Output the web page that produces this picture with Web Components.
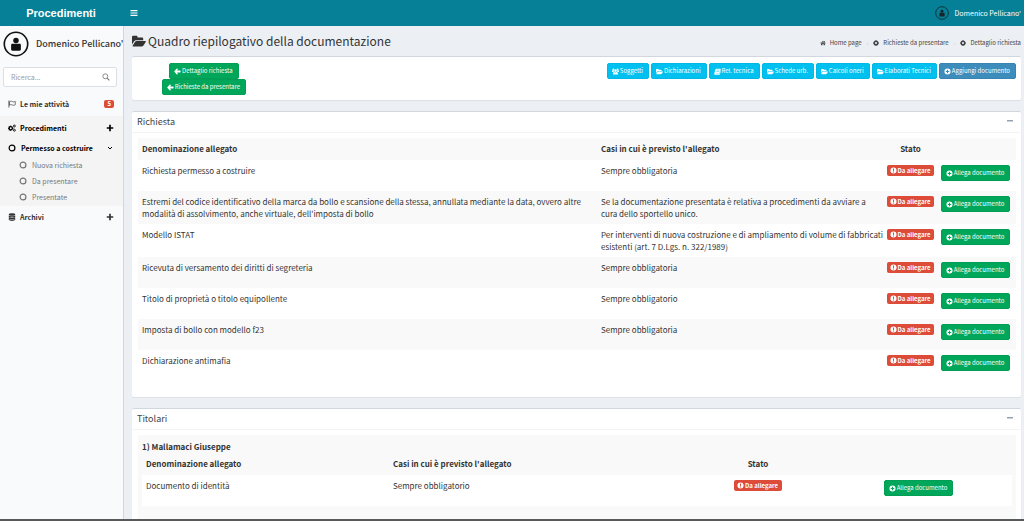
<!DOCTYPE html>
<html lang="it">
<head>
<meta charset="utf-8">
<title>Procedimenti</title>
<style>
html, body { margin: 0; height: 100%; }
body {
  font-family: "Noto Sans CJK SC", "Noto Sans", sans-serif;
  font-size: 8px; line-height: 12px; color: #333;
  --teal: #058096; --green: #00a65a; --red: #dd4b39; --cyan: #00c0ef; --blue: #3c8dbc;
  --small: 6px; --body: 8px; --title: 9px; --page: 12px;
}
</style>
</head>
<body>
<app-shell>
  <app-header slot="header" brand="Procedimenti" user="Domenico Pellicano'"></app-header>
  <app-sidebar slot="sidebar" user="Domenico Pellicano'"></app-sidebar>
  <page-heading heading="Quadro riepilogativo della documentazione"></page-heading>
  <action-bar>
    <action-button slot="back" icon="left">Dettaglio richiesta</action-button>
    <action-button slot="back" icon="left">Richieste da presentare</action-button>
    <action-button kind="info" icon="users">Soggetti</action-button>
    <action-button kind="info" icon="folder">Dichiarazioni</action-button>
    <action-button kind="info" icon="book">Rel. tecnica</action-button>
    <action-button kind="info" icon="folder">Schede urb.</action-button>
    <action-button kind="info" icon="folder">Calcoli oneri</action-button>
    <action-button kind="info" icon="folder">Elaborati Tecnici</action-button>
    <action-button kind="primary" icon="plus-circle">Aggiungi documento</action-button>
  </action-bar>
  <panel-box heading="Richiesta"><doc-table source="richiesta"></doc-table></panel-box>
  <panel-box heading="Titolari">
    <holder-card name="1) Mallamaci Giuseppe"><doc-table source="titolare"></doc-table></holder-card>
  </panel-box>
</app-shell>

<script>
const ICONS = {
  bars: '<path d="M1 2h14v2.4H1zM1 6.8h14v2.4H1zM1 11.6h14V14H1z"/>',
  folder: '<path d="M0 12V3.500C0 2.600.6 2 1.500 2h3.300c.9 0 1.500.6 1.500 1.500V4h5c.9 0 1.500.6 1.500 1.500V7H5C4 7 3 7.500 2.400 8.300z"/><path d="M.6 13.600 3.300 9.200C3.700 8.500 4.500 8 5.300 8H15c.8 0 1.100.5.7 1.100l-2.600 4.100c-.4.600-1.200 1-2 1H1.200c-.5 0-.8-.2-.6-.6z"/>',
  left: '<path d="M7.500 1.200 9.200 2.900 6.600 5.600H14c.6 0 1 .4 1 1v2.800c0 .6-.4 1-1 1H6.600l2.600 2.700-1.700 1.700c-.3.3-.8.3-1.100 0L.8 8.600c-.4-.4-.4-.8 0-1.200l5.600-6.200c.3-.3.8-.3 1.100 0z"/>',
  'plus-circle': '<path fill-rule="evenodd" d="M8 1a7 7 0 1 0 0 14A7 7 0 0 0 8 1zM6.700 4h2.600v2.700H12v2.600H9.300V12H6.700V9.300H4V6.700h2.700z"/>',
  alert: '<path fill-rule="evenodd" d="M8 1a7 7 0 1 0 0 14A7 7 0 0 0 8 1zM6.700 3.500h2.600L9 9.300H7zM6.800 10.500h2.400v2.200H6.800z"/>',
  book: '<path fill-rule="evenodd" d="M5.500 1.500H14c1 0 1.600.8 1.300 1.700l-2.500 8.600c-.3.900-.9 1.200-1.700 1.200H3.200c-.4 0-.4.8.1.8h8.600c.7 0 1-.3 1.200-.9l2.400-7.800c.5.400.6.9.4 1.500l-2.300 7.500c-.3.900-.9 1.400-1.900 1.400H3C1.300 15.500 0 13.800.6 12.200l2.700-8.900c.3-1 1-1.800 2.200-1.800zM6.500 4l-.3 1.200h6L12.500 4zM5.700 6.600l-.3 1.200h6l.3-1.200z"/>',
  users: '<circle cx="8" cy="6" r="2.900"/><circle cx="3.200" cy="3.400" r="2.100"/><circle cx="12.800" cy="3.400" r="2.100"/><path d="M3.500 15c-.8 0-1.300-.5-1.300-1.300 0-2.400.8-4.700 2.800-4.700 1.700 1.400 4.300 1.400 6 0 2 0 2.800 2.300 2.800 4.700 0 .8-.5 1.300-1.300 1.300zM0 8.300C0 6.500.4 5 1.600 5c1 .7 1.900.9 2.700.7 0 1 .1 1.700.6 2.500-1 0-1.900.4-2.500 1.200H1.300C.5 9.400 0 9 0 8.300zM16 8.300C16 6.500 15.600 5 14.400 5c-1 .7-1.900.9-2.700.7 0 1-.1 1.700-.6 2.500 1 0 1.900.4 2.500 1.200h1.100c.8 0 1.300-.4 1.300-1.100z"/>',
  home: '<path d="m8 2 2.900 2.400V2.800H13v3.400l2.900 2.400-.9 1L8 3.900l-7 5.700-.9-1z"/><path d="m8 5.200 5.200 4.300V14H9.500v-3.700h-3V14H2.800V9.500z"/>',
  dot: '<circle cx="8" cy="8" r="4.800" fill="none" stroke="currentColor" stroke-width="4"/><path d="M7 0h2v3H7zM7 13h2v3H7zM0 7h3v2H0zM13 7h3v2h-3z"/>',
  ring: '<circle cx="8" cy="8" r="5.800" fill="none" stroke="currentColor" stroke-width="2.400"/>',
  plus: '<path d="M6.300 1.500h3.400v4.800h4.800v3.400H9.700v4.800H6.300V9.700H1.500V6.300h4.800z"/>',
  minus: '<path d="M2 6h12v3H2z"/>',
  down: '<path d="m4 6 4 4 4-4" fill="none" stroke="currentColor" stroke-width="2"/>',
  search: '<circle cx="6.600" cy="6.600" r="4.900" fill="none" stroke="currentColor" stroke-width="1.700"/><path d="m10.300 10.300 4.500 4.500" stroke="currentColor" stroke-width="2.200"/>',
  flag: '<path d="M1.800 1v14" stroke="currentColor" stroke-width="1.500"/><path d="M3 3.500c2.200-1.300 4-1.200 5.800-.3 2 1 3.500.6 5.700-.5v6.800c-2.200 1.200-3.700 1.500-5.700.5-1.800-.9-3.600-1-5.800.3z" fill="none" stroke="currentColor" stroke-width="1.300"/>',
  cogs: '<circle cx="5.500" cy="8.500" r="3.300" fill="none" stroke="currentColor" stroke-width="2.800"/><path d="M4.600 2.800h1.800v2H4.600zM4.600 12.200h1.800v2H4.600zM0 7.600h2v1.800H0zM9 7.600h2v1.800H9zM1 5.200 2.300 4l1.400 1.300-1.300 1.300zM1 11.800 2.300 13l1.400-1.300-1.300-1.300z"/><circle cx="12.800" cy="4" r="1.900" fill="none" stroke="currentColor" stroke-width="1.800"/><circle cx="12.800" cy="12.500" r="1.900" fill="none" stroke="currentColor" stroke-width="1.800"/>',
  database: '<ellipse cx="8" cy="3" rx="6.500" ry="2.500"/><path d="M1.500 5c2 2 11 2 13 0v2.300c-2 2.300-11 2.300-13 0zM1.500 8.600c2 2 11 2 13 0v2.200c-2 2.300-11 2.300-13 0zM1.500 12c2 2 11 2 13 0v1.500c-2 3-11 3-13 0z"/>',
  user: '<circle cx="8" cy="8" r="7.200" fill="none" stroke="currentColor" stroke-width="1"/><circle cx="8" cy="5.900" r="1.700"/><path d="M5 8.600c0-.5.300-.8.800-.8h4.400c.5 0 .8.300.8.800v2.700c0 .5-.3.800-.8.800H5.800c-.5 0-.8-.3-.8-.8z"/>'
};

const COLUMNS = ['Denominazione allegato', "Casi in cui è previsto l'allegato", 'Stato', ''];
const TABLES = {
  richiesta: {
    widths: [459, 289, 49, 81],
    rows: [
      ['Richiesta permesso a costruire', 'Sempre obbligatoria'],
      ["Estremi del codice identificativo della marca da bollo e scansione della stessa, annullata mediante la data, ovvero altre modalità di assolvimento, anche virtuale, dell'imposta di bollo", 'Se la documentazione presentata è relativa a procedimenti da avviare a <span class="keep">cura dello sportello</span> unico.'],
      ['Modello ISTAT', 'Per interventi di nuova costruzione e di ampliamento di volume di fabbricati esistenti (art. 7 D.Lgs. n. 322/1989)'],
      ['Ricevuta di versamento dei diritti di segreteria', 'Sempre obbligatoria'],
      ['Titolo di proprietà o titolo equipollente', 'Sempre obbligatorio'],
      ['Imposta di bollo con modello f23', 'Sempre obbligatoria'],
      ['Dichiarazione antimafia', '']
    ]
  },
  titolare: { widths: [247, 302, 134, 187], rows: [['Documento di identità', 'Sempre obbligatorio']] }
};

function define(name, render) {
  customElements.define(name, class extends HTMLElement {
    connectedCallback() {
      if (this.shadowRoot) return;
      const t = document.createElement('template');
      t.innerHTML = '<style>*{box-sizing:border-box}:host{display:block}</style>' + render(this);
      this.attachShadow({ mode: 'open' }).append(t.content.cloneNode(true));
    }
  });
}

define('ui-icon', el => `<style>
  :host{display:inline-block;width:var(--icon,8px);height:var(--icon,8px);flex:none}
  svg{display:block;width:100%;height:100%;fill:currentColor}
  </style><svg viewBox="0 0 16 16" aria-hidden="true">${ICONS[el.getAttribute('name')]}</svg>`);

define('app-shell', () => `<style>
  :host{display:grid;grid-template:auto minmax(0,1fr) 2px / 124px minmax(0,1fr);height:100vh;background:#ecf0f5}
  slot[name=header]{display:block;grid-column:1/-1}
  main{padding:6px 3px 0 8px;overflow:auto;scrollbar-width:none}
  footer{grid-column:1/-1;background:#58595b}
  </style><slot name="header"></slot><slot name="sidebar"></slot><main><slot></slot></main><footer></footer>`);

define('app-header', el => `<style>
  header{display:flex;align-items:center;height:26px;background:var(--teal);color:#fff}
  .brand{width:122px;text-align:center;font:bold 11px/26px "Liberation Sans",sans-serif;color:#fff;text-decoration:none}
  button{border:0;background:none;color:inherit;padding:0 8px;--icon:8px;line-height:0}
  .user{display:flex;align-items:center;gap:5px;margin-left:auto;padding-right:3px;color:#fff;text-decoration:none;font-size:7px}
  .user ui-icon{--icon:14px;color:#14262b}
  </style><header><a class="brand" href="#">${el.getAttribute('brand')}</a>
  <button aria-label="Menu"><ui-icon name="bars"></ui-icon></button>
  <a class="user" href="#"><ui-icon name="user"></ui-icon>${el.getAttribute('user')}</a></header>`);

define('app-sidebar', el => `<style>
  :host{background:#f9fafc;border-right:1px solid #d2d6de;overflow:hidden}
  a{color:inherit;text-decoration:none;white-space:nowrap}
  .user{display:flex;align-items:center;gap:7px;padding:5px 0 0 3px;font-size:9px;font-weight:500}
  .user ui-icon{--icon:26px;color:#111}
  form{display:flex;align-items:center;height:20px;margin:10px 6px 4px 3px;border:1px solid #dbdfe6;border-radius:2px;background:#fff}
  input{flex:1;min-width:0;border:0;background:none;font:inherit;font-size:7px;padding:0 7px;outline:0}
  input::placeholder{color:#999}
  form button{border:0;background:none;color:#777;padding:0 6px;line-height:0}
  ul{list-style:none;margin:0;padding:0}
  li>a{display:flex;align-items:center;gap:4px;font-size:7px;font-weight:700;padding:0 9px 0 8px;height:22px}
  .end{margin-left:auto}
  .count{background:var(--red);color:#fff;font-size:6px;line-height:8px;padding:0 3px;border-radius:2px}
  .first{padding:4px 0 3px}
  .first>a{height:18px}
  .open{background:#f4f4f5;color:#000;padding:1px 0}
  .sub>li>a{gap:5px;height:18px}
  .leaf a{font-weight:400;color:#777;height:16px;padding-left:19px;gap:5px}
  </style><nav><a class="user" href="#"><ui-icon name="user"></ui-icon>${el.getAttribute('user')}</a>
  <form><input type="search" placeholder="Ricerca..." aria-label="Ricerca"><button type="button" aria-label="Cerca"><ui-icon name="search"></ui-icon></button></form>
  <ul>
   <li class="first"><a href="#"><ui-icon name="flag"></ui-icon>Le mie attività<span class="end count">5</span></a></li>
   <li class="open"><a href="#"><ui-icon name="cogs"></ui-icon>Procedimenti<ui-icon class="end" name="plus"></ui-icon></a>
    <ul class="sub"><li><a href="#"><ui-icon name="ring"></ui-icon>Permesso a costruire<ui-icon class="end" name="down"></ui-icon></a>
     <ul class="leaf">${['Nuova richiesta', 'Da presentare', 'Presentate'].map(t => `<li><a href="#"><ui-icon name="ring"></ui-icon>${t}</a></li>`).join('')}</ul></li></ul></li>
   <li><a href="#"><ui-icon name="database"></ui-icon>Archivi<ui-icon class="end" name="plus"></ui-icon></a></li>
  </ul></nav>`);

define('page-heading', el => `<style>
  :host{display:flex;justify-content:space-between;align-items:flex-start;height:24px}
  h1{display:flex;align-items:center;gap:2px;margin:0;font-size:var(--page);line-height:18px;font-weight:400;--icon:14px}
  ol{display:flex;gap:5px;list-style:none;margin:0;padding:5px 0 0;font-size:var(--small)}
  li+li::before{content:"›";color:#ccc;margin-right:5px}
  a{display:inline-flex;align-items:center;gap:4px;color:#444;text-decoration:none;--icon:6px}
  </style><h1><ui-icon name="folder"></ui-icon>${el.getAttribute('heading')}</h1>
  <ol><li><a href="#"><ui-icon name="home"></ui-icon>Home page</a></li><li><a href="#"><ui-icon name="dot"></ui-icon>Richieste da presentare</a></li><li><a href="#"><ui-icon name="dot"></ui-icon>Dettaglio richiesta</a></li></ol>`);

define('action-button', el => `<style>
  :host{display:inline-block;--fill:var(--green);--edge:#009f55}
  :host([kind=info]){--fill:var(--cyan);--edge:#00b8e6}
  :host([kind=primary]){--fill:var(--blue);--edge:#3884b1}
  button{display:flex;align-items:center;gap:1px;height:16px;padding:0 5px 0 4px;border:1px solid var(--edge);border-radius:2px;background:var(--fill);color:#fff;font:inherit;font-size:var(--small);line-height:12px;white-space:nowrap;--icon:7px}
  </style><button type="button"><ui-icon name="${el.getAttribute('icon')}"></ui-icon><slot></slot></button>`);

define('status-badge', () => `<style>
  :host{display:inline-flex;align-items:center;gap:1px;height:11px;padding:0 4px 0 3px;border-radius:2px;background:var(--red);color:#fff;font-size:var(--small);font-weight:700;line-height:11px;white-space:nowrap;vertical-align:top;--icon:7px}
  </style><ui-icon name="alert"></ui-icon><slot></slot>`);

define('action-bar', () => `<style>
  :host{display:grid;grid-template-columns:15% 1fr;padding:6px 5px 5px 6px;background:#fff;border-top:1px solid #d2d6de;border-radius:2px;box-shadow:0 1px 1px #0001;margin-bottom:11px}
  .back{display:flex;flex-direction:column;align-items:center}
  .go{display:flex;justify-content:flex-end;align-items:start;gap:2px}
  </style><div class="back"><slot name="back"></slot></div><div class="go"><slot></slot></div>`);

define('panel-box', el => `<style>
  :host{background:#fff;border-top:1px solid #d2d6de;border-radius:2px;box-shadow:0 1px 1px #0001;margin-bottom:11px}
  header{display:flex;justify-content:space-between;align-items:center;height:21px;padding:0 7px 0 5px;border-bottom:1px solid #f4f4f4}
  h2{margin:0;font-size:var(--title);line-height:14px;font-weight:400;color:#444}
  header button{border:0;background:none;padding:0 0 2px;color:#97a0b3;line-height:0}
  section{padding:5px 5px 16px 6px}
  </style><header><h2>${el.getAttribute('heading')}</h2><button aria-label="Riduci"><ui-icon name="minus"></ui-icon></button></header>
  <section><slot></slot></section>`);

define('holder-card', el => `<style>
  :host{background:#f9f9f9;padding:6px 4px 30px}
  h3{margin:0;font-size:var(--body);line-height:12px;font-weight:700}
  </style><h3>${el.getAttribute('name')}</h3><slot></slot>`);

define('doc-table', el => {
  const data = TABLES[el.getAttribute('source')];
  return `<style>
  table{width:100%;table-layout:fixed;border-collapse:collapse;font-size:var(--body);line-height:12px}
  th,td{padding:5px 0 4px 4px;text-align:left;vertical-align:top}
  th{padding-bottom:5px}
  tbody td{height:31px}
  .keep{white-space:nowrap}
  th:nth-child(n+3),td:nth-child(n+3){text-align:center;padding-left:0}
  td:nth-child(n+3){padding-bottom:0;line-height:0}
  thead tr,tbody tr:nth-child(even){background:#f9f9f9}
  tbody tr{background:#fff}
  </style><table><colgroup>${data.widths.map(w => `<col style="width:${w}px">`).join('')}</colgroup>
  <thead><tr>${COLUMNS.map(c => c ? `<th scope="col">${c}</th>` : '<td></td>').join('')}</tr></thead>
  <tbody>${data.rows.map(r => `<tr><td>${r[0]}</td><td>${r[1]}</td><td><status-badge>Da allegare</status-badge></td><td><action-button icon="plus-circle">Allega documento</action-button></td></tr>`).join('')}</tbody></table>`;
});
</script>
</body>
</html>
